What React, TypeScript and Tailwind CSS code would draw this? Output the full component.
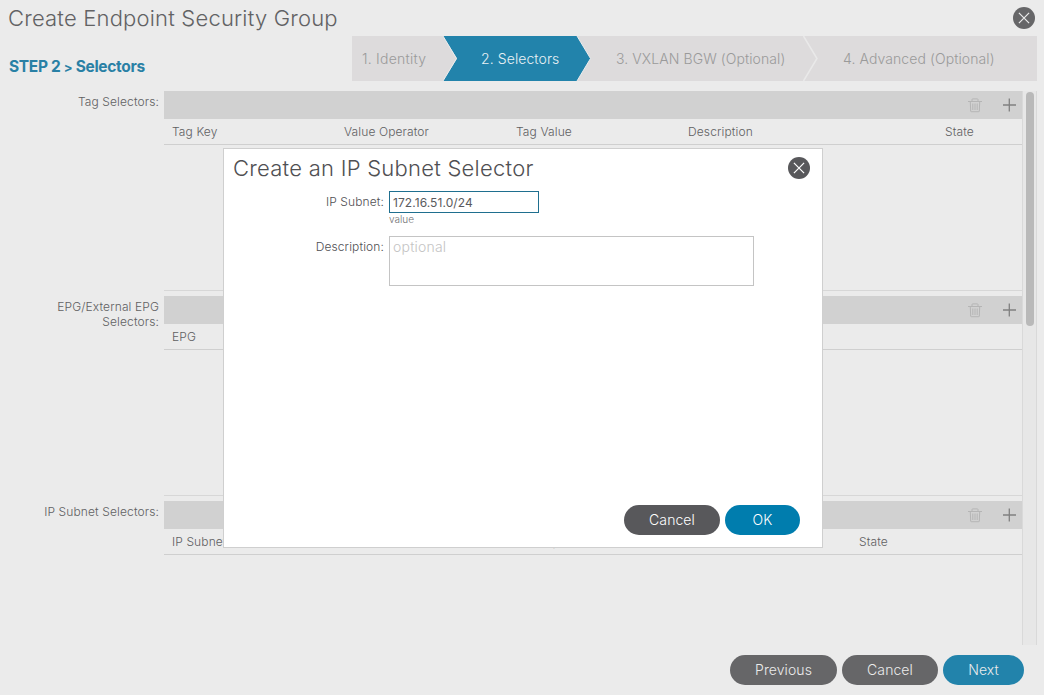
import React from "react";

function TrashIcon() {
  return (
    <svg width="14" height="15" viewBox="0 0 14 15" fill="none" stroke="#b5b5b5" strokeWidth="1">
      <path d="M0 3.5h14M4 3V1.5Q4 .9 4.6 .9h4.800q.6 0 .6.6V3M2.300 4l.4 9.100q0 .6.6.6h7.400q.6 0 .6-.6L11.700 4M4.800 5.500v6.500M7 5.500v6.500M9.200 5.500v6.500" />
    </svg>
  );
}

function PlusIcon() {
  return (
    <svg width="13" height="14" viewBox="0 0 13 14" stroke="#808080" strokeWidth="1.3">
      <path d="M0 7h13M6.300 .5v13" />
    </svg>
  );
}

function CloseButton({ className }: { className: string }) {
  return (
    <button aria-label="Close" className={`flex size-[22px] shrink-0 items-center justify-center rounded-full ${className}`}>
      <svg width="12" height="12" viewBox="0 0 12 12" stroke="currentColor" strokeWidth="1.2">
        <path d="M.9 .9l10.2 10.2M11.1 .9L.9 11.1" />
      </svg>
    </button>
  );
}

function Pill({ label, className }: { label: string; className: string }) {
  return (
    <button className={`h-[30px] rounded-full pb-px text-[14px] font-[350] tracking-[0.08px] ${className}`}>{label}</button>
  );
}

type Section = { label: string; grid: string; columns: string[] };

const sections: Section[] = [
  {
    label: "Tag Selectors:",
    grid: "grid-cols-[172px_172px_172px_257px_1fr]",
    columns: ["Tag Key", "Value Operator", "Tag Value", "Description", "State"],
  },
  { label: "EPG/External EPG Selectors:", grid: "grid-cols-1", columns: ["EPG"] },
  {
    label: "IP Subnet Selectors:",
    grid: "grid-cols-[344px_343px_1fr]",
    columns: ["IP Subnet", "Description", "State"],
  },
];

function SelectorSection({ section }: { section: Section }) {
  return (
    <div className="flex h-[200px] shrink-0">
      <div className="mr-[5px] w-[159px] shrink-0 pt-[3px] pl-8 text-right text-[12px] leading-[15px] font-[350] tracking-[0.12px] text-[#606062]">
        {section.label}
      </div>
      <div className="flex flex-1 flex-col border-b border-[#d7d7d7]">
        <div className="flex h-7 items-center justify-end gap-[21px] bg-[#d1d1d1] pr-[6px]">
          <TrashIcon />
          <PlusIcon />
        </div>
        <div className={`grid h-[26px] items-center border-b border-[#cfcfcf] pl-2 text-[12px] font-[350] tracking-[0.12px] text-[#606062] ${section.grid}`}>
          {section.columns.map((c) => (
            <span key={c} className="whitespace-nowrap">{c}</span>
          ))}
        </div>
      </div>
    </div>
  );
}

function Stepper() {
  return (
    <div className="relative flex h-[45px] w-[685px] bg-[#dddbdc] text-[14px] leading-[45px] font-[350] tracking-[0.09px] text-[#9a9a9a]">
      <svg className="absolute inset-0" width="685" height="45" viewBox="0 0 685 45">
        <path d="M91 0H225L238.500 22.500L225 45H91L105 22.500Z" fill="#2283ab" />
        <path d="M91 0L104.500 22.500L91 45M225 0L238.500 22.500L225 45" fill="none" stroke="#ebebeb" strokeWidth="1" />
        <path d="M451.500 0L465 22.500L451.500 45" fill="none" stroke="#e9e9e9" strokeWidth="1.500" />
      </svg>
      <span className="relative w-[119px] pl-[10px] tracking-[0.24px]">1. Identity</span>
      <span className="relative w-[135px] pl-[10px] text-[#e8f1f5]">2. Selectors</span>
      <span className="relative w-[227px] pl-[10px]">3. VXLAN BGW (Optional)</span>
      <span className="relative pl-[10px]">4. Advanced (Optional)</span>
    </div>
  );
}

function SubnetDialog() {
  return (
    <div role="dialog" className="absolute top-[148px] left-[223px] flex h-[400px] w-[600px] flex-col border border-[#cfcfcf] bg-white text-[#505053]">
      <div className="flex h-[42px] items-start justify-between pt-[8px] pr-3 pl-[9px]">
        <h2 className="text-[22px] leading-[23px] font-[350] tracking-[0.25px]">Create an IP Subnet Selector</h2>
        <CloseButton className="bg-[#58585b] text-white" />
      </div>
      <div className="flex">
        <label className="mr-[5px] w-[160px] pt-[3px] text-right text-[12px] leading-[15px] font-[350] tracking-[0.12px]">IP Subnet:</label>
        <div>
          <input className="block h-[22px] w-[150px] border border-[#1f6f8f] bg-white px-[3px] text-[12px] tracking-[0.07px] text-[#5a5a5d] outline-none" defaultValue="172.16.51.0/24" />
          <div className="text-[10px] leading-[13px] font-[350] text-[#707072]">value</div>
        </div>
      </div>
      <div className="mt-[10px] flex">
        <label className="mr-[5px] w-[160px] pt-[3px] text-right text-[12px] leading-[15px] font-[350] tracking-[0.12px]">Description:</label>
        <textarea className="block h-[50px] w-[365px] resize-none border border-[#c4c4c4] px-[3px] pt-[1px] text-[14px] leading-[18px] font-[350] tracking-[0.2px] outline-none placeholder:text-[#c4c4c4]" placeholder="optional" />
      </div>
      <div className="mt-auto flex justify-end gap-[5px] pr-[22px] pb-3">
        <Pill label="Cancel" className="w-24 bg-[#58585b] text-white" />
        <Pill label="OK" className="w-[75px] bg-[#007dae] text-white" />
      </div>
    </div>
  );
}

export default function App() {
  return (
    <div className="relative flex h-[695px] w-[1044px] flex-col overflow-hidden bg-[#ebebeb] font-['Inter',sans-serif]">
      <header className="flex h-9 shrink-0 items-start justify-between pt-[7px] pr-[9px] pl-2">
        <h1 className="text-[22px] leading-[23px] font-[350] tracking-[0.19px] text-[#626264]">Create Endpoint Security Group</h1>
        <CloseButton className="bg-[#666668] text-[#ebebeb]" />
      </header>
      <div className="flex h-[55px] shrink-0 justify-between pr-[7px] pl-[9px]">
        <div className="pt-[21px] text-[15.5px] leading-[20px] font-bold tracking-[-0.32px] text-[#2980a5]">
          STEP 2 <span className="text-[13px]">&gt;</span> Selectors
        </div>
        <Stepper />
      </div>
      <main className="flex h-[554px] shrink-0">
        <div className="flex w-[1022px] flex-col gap-[5px] overflow-hidden">
          {sections.map((s) => (
            <SelectorSection key={s.label} section={s} />
          ))}
        </div>
        <div className="w-[15px] border-x border-[#d9d9d9] bg-[#e7e7e7] px-[3px] pt-[1px]">
          <div className="h-[234px] w-2 rounded-full bg-[#b9b9b9]" />
        </div>
      </main>
      <footer className="flex justify-end gap-[5px] pt-[10px] pr-5">
        <Pill label="Previous" className="w-[107px] bg-[#666668] text-[#ebebeb]" />
        <Pill label="Cancel" className="w-24 bg-[#666668] text-[#ebebeb]" />
        <Pill label="Next" className="w-[81px] bg-[#2283ab] text-[#ebebeb]" />
      </footer>
      <SubnetDialog />
    </div>
  );
}
